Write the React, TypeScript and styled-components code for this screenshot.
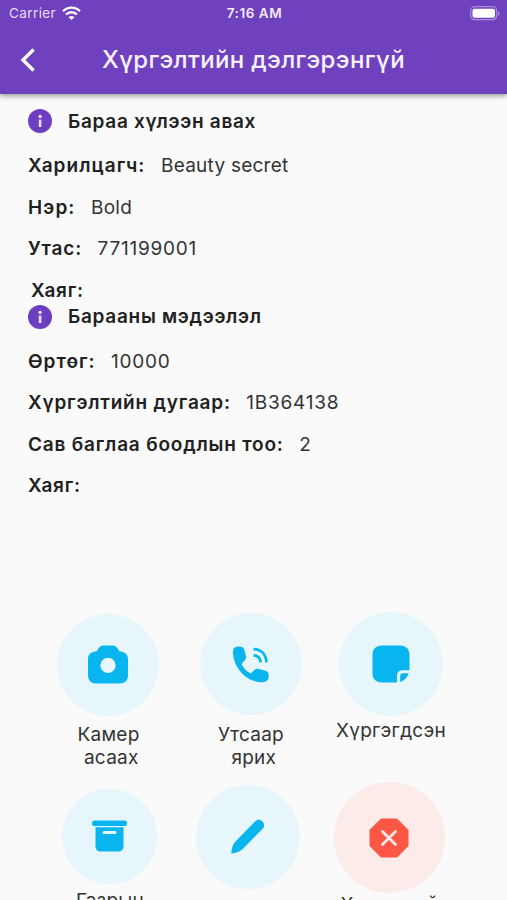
import React from "react";
import styled, { createGlobalStyle } from "styled-components";

const GlobalStyle = createGlobalStyle`
  *, *::before, *::after { box-sizing: border-box; }
  html, body { margin: 0; padding: 0; background: #fafafa; overflow: hidden; }
`;

const Screen = styled.div`
  width: 507px;
  height: 900px;
  overflow: hidden;
  display: flex;
  flex-direction: column;
  background: #fafafa;
  color: #212121;
  font-family: Inter, "Liberation Sans", sans-serif;
`;

const Header = styled.header`
  flex: none;
  height: 94px;
  background: #7041be;
  color: #fff;
  box-shadow: 0 2px 5px rgba(0, 0, 0, 0.38);
`;

const StatusBar = styled.div`
  height: 27px;
  display: grid;
  grid-template-columns: 1fr auto 1fr;
  align-items: center;
  padding: 0 7px 0 9px;
  font-size: 13px;
  line-height: 27px;
`;

const Carrier = styled.div`
  display: flex;
  align-items: center;
  gap: 6px;
  font-size: 13.5px;
  letter-spacing: 0.4px;
  color: #e6dcf5;
`;

const Clock = styled.div`
  font-size: 13.5px;
  font-weight: 600;
  letter-spacing: 0.55px;
  color: #f3ecfc;
`;

const Battery = styled.div`
  display: flex;
  justify-content: flex-end;
`;

const TitleBar = styled.div`
  height: 65px;
  display: flex;
  align-items: center;
  padding-left: 20px;
`;

const BackButton = styled.button`
  display: flex;
  width: 16px;
  padding: 0;
  border: 0;
  background: none;
  color: inherit;
`;

const Title = styled.h1`
  margin: 0 0 0 66px;
  font-size: 24px;
  line-height: 30px;
  font-weight: 500;
  letter-spacing: 0.36px;
  white-space: nowrap;
  color: #f8f2ff;
`;

const Details = styled.main`
  flex: none;
  height: 518px;
  padding: 14px 0 0 28px;
`;

const SectionTitle = styled.h2`
  display: flex;
  align-items: center;
  gap: 16px;
  height: 26px;
  margin: 0 0 11px;
  font-size: 19px;
  font-weight: 600;
  letter-spacing: 0.7px;
`;

const Field = styled.div<{ $last?: boolean }>`
  display: flex;
  align-items: center;
  gap: 15.5px;
  height: ${(p) => (p.$last ? 34 : 41.5)}px;
  padding: ${(p) => (p.$last ? "7px 0 0 3px" : "0")};
  font-size: 19px;
  white-space: nowrap;
`;

const FieldLabel = styled.span<{ $spacing?: number }>`
  font-weight: 600;
  letter-spacing: ${(p) => p.$spacing ?? 0.8}px;
`;

const FieldValue = styled.span<{ $numeric: boolean }>`
  font-weight: 400;
  letter-spacing: ${(p) => (p.$numeric ? 0.75 : 0.25)}px;
  color: #333;
`;

const ActionRow = styled.div<{ $columns: string; $height: number }>`
  flex: none;
  display: grid;
  grid-template-columns: ${(p) => p.$columns};
  height: ${(p) => p.$height}px;
  padding-left: 37px;
`;

const Action = styled.button<{ $top: number }>`
  display: flex;
  flex-direction: column;
  align-items: center;
  align-self: start;
  padding: 0;
  margin: ${(p) => p.$top}px 0 0;
  border: 0;
  background: none;
  color: #333;
  font: inherit;
`;

const Bubble = styled.span<{ $size: number; $danger?: boolean }>`
  display: flex;
  align-items: center;
  justify-content: center;
  width: ${(p) => p.$size}px;
  height: ${(p) => p.$size}px;
  border-radius: 50%;
  background: ${(p) => (p.$danger ? "#fbebe9" : "#e7f6fb")};
  color: ${(p) => (p.$danger ? "#ff5745" : "#08b5ef")};
`;

const ActionLabel = styled.span<{ $gap: number }>`
  margin-top: ${(p) => p.$gap}px;
  padding-left: 1px;
  font-size: 19px;
  line-height: 23.5px;
  letter-spacing: 0.25px;
  text-align: center;
  white-space: pre;
`;

const Wifi = () => (
  <svg width="19" height="15" viewBox="0 0 19 15" fill="none" stroke="#fff" strokeWidth="2.3">
    <path d="M1 5.2C5.8.4 13.2.4 18 5.2M4 8.5c3.1-3 7.9-3 11 0" />
    <path d="M6.5 11.2c1.6-1.5 4.4-1.5 6 0L9.5 14Z" fill="#fff" stroke="none" />
  </svg>
);

const BatteryIcon = () => (
  <svg width="30" height="15" viewBox="0 0 30 15">
    <rect x=".7" y=".7" width="26" height="13" rx="4" fill="none" stroke="#aa8cda" strokeWidth="1.2" />
    <rect x="2.5" y="2.8" width="22.5" height="9" rx="2" fill="#fff" />
    <path d="M28 5c2 1 2 4 0 5Z" fill="#aa8cda" />
  </svg>
);

const Info = () => (
  <svg width="24" height="24" viewBox="0 0 24 24">
    <circle cx="12" cy="12" r="12" fill="#6d3fc0" />
    <circle cx="12.1" cy="7.4" r="1.6" fill="#f4eafc" />
    <path d="M10.8 10.500h2.600V18h-2.600z" fill="#e9dcf8" />
  </svg>
);

const Camera = () => (
  <svg width="40" height="39" viewBox="0 0 40 39" fill="currentColor">
    <path fillRule="evenodd" d="M16 .5h8c3 0 4.400 1 5.600 3l1 1.700c.5.9 1 1.100 2 1.200C37 6.900 40 9.500 40 14v16c0 5.500-3 8.500-8.500 8.500h-23C3 38.500 0 35.500 0 30V14C0 9.500 3 6.900 7.400 6.400c1-.1 1.500-.3 2-1.200l1-1.700C11.600 1.500 13 .5 16 .5ZM20 12.700a7.700 7.700 0 1 0 0 15.400 7.700 7.700 0 0 0 0-15.400Z" />
  </svg>
);

const Phone = () => (
  <svg width="38" height="38" viewBox="0 0 38 38" fill="none">
    <path fill="currentColor" d="M1 7C1 3 3 1.500 7 1.500c3 0 4.500.8 5.300 3.300l1.500 5.400c.6 2.200.2 3.500-1.300 5.200l-3 3.600c2 4 5 7.300 9.200 9.500l3.400-3.300c1.400-1.400 2.800-1.700 4.700-1.300l6 1.500c2.800.7 4 2.300 4 5 0 4.500-2.600 6.800-7 6.800C14 37.200 1 22 1 7Z" />
    <path stroke="currentColor" strokeWidth="2.700" d="M21.500 4.200c8 .2 12.500 5.300 13 13.300M21.500 10.400c4.500.2 6.700 2.500 7.200 7" />
  </svg>
);

const Note = () => (
  <svg width="38" height="38" viewBox="0 0 38 38" fill="currentColor">
    <path d="M10 .5h18c6 0 9.500 3.500 9.500 9.500v15.200H31c-4 0-6 2-6 6v6.300H10C4 37.500.5 34 .5 28V10C.5 4 4 .5 10 .5Z" />
    <path d="M36.800 28.200H31c-2 0-2.800 1-2.800 3V37c4-1.500 7-4.500 8.600-8.800Z" />
  </svg>
);

const Archive = () => (
  <svg width="36" height="32" viewBox="0 0 36 32" fill="currentColor">
    <rect x="0" y=".5" width="35" height="5.500" rx="2.500" />
    <path fillRule="evenodd" d="M3.500 7.300h28V26c0 3.500-2 5.500-5.500 5.500H9C5.500 31.500 3.500 29.500 3.500 26ZM12 11a1.500 1.500 0 0 0 0 3h11a1.500 1.500 0 0 0 0-3Z" />
  </svg>
);

const Pencil = () => (
  <svg width="36" height="36" viewBox="0 0 36 36" fill="currentColor">
    <path d="M25 2.500c2.500-2.300 5.200-2.100 7.400 0 2.300 2.300 2.300 5-.1 7.500L13.500 29.200C10 32.800 6 34 1.300 34.600 1.700 29 2.600 25.500 6 22Z" />
  </svg>
);

const Stop = () => (
  <svg width="40" height="40" viewBox="0 0 40 40">
    <path d="M12 .5h16L39.500 12v16L28 39.500H12L.5 28V12Z" fill="currentColor" />
    <path d="m13.500 13.500 13 13m0-13-13 13" stroke="#fbebe9" strokeWidth="2.800" strokeLinecap="round" />
  </svg>
);

type Detail = { label: string; value: string; spacing?: number };

const recipient: Detail[] = [
  { label: "Харилцагч:", value: "Beauty secret", spacing: 1.05 },
  { label: "Нэр:", value: "Bold", spacing: 1.1 },
  { label: "Утас:", value: "771199001" },
];

const parcel: Detail[] = [
  { label: "Өртөг:", value: "10000", spacing: 1 },
  { label: "Хүргэлтийн дугаар:", value: "1B364138" },
  { label: "Сав баглаа боодлын тоо:", value: "2" },
  { label: "Хаяг:", value: "" },
];

const Fields = ({ rows }: { rows: Detail[] }) => (
  <>
    {rows.map(({ label, value, spacing }) => (
      <Field key={label}>
        <FieldLabel $spacing={spacing}>{label}</FieldLabel>
        <FieldValue $numeric={/\d/.test(value)}>{value}</FieldValue>
      </Field>
    ))}
  </>
);

export default function App() {
  return (
    <>
      <GlobalStyle />
      <Screen>
        <Header>
          <StatusBar>
            <Carrier>Carrier <Wifi /></Carrier>
            <Clock>7:16 AM</Clock>
            <Battery><BatteryIcon /></Battery>
          </StatusBar>
          <TitleBar>
            <BackButton aria-label="Буцах">
              <svg width="16" height="24" viewBox="0 0 16 24" fill="none" stroke="#fff" strokeWidth="3.400">
                <path d="M13.600 1.500 3 12l10.600 10.500" />
              </svg>
            </BackButton>
            <Title>Хүргэлтийн дэлгэрэнгүй</Title>
          </TitleBar>
        </Header>
        <Details>
          <SectionTitle><Info />Бараа хүлээн авах</SectionTitle>
          <Fields rows={recipient} />
          <Field $last><FieldLabel>Хаяг:</FieldLabel></Field>
          <SectionTitle><Info />Барааны мэдээлэл</SectionTitle>
          <Fields rows={parcel} />
        </Details>
        <ActionRow $columns="142px 143px 137px" $height={170}>
          <Action $top={1.5}>
            <Bubble $size={102}><Camera /></Bubble>
            <ActionLabel $gap={7}>{"Камер\n асаах"}</ActionLabel>
          </Action>
          <Action $top={1}>
            <Bubble $size={102}><Phone /></Bubble>
            <ActionLabel $gap={7.5}>{"Утсаар\n ярих"}</ActionLabel>
          </Action>
          <Action $top={0}>
            <Bubble $size={104}><Note /></Bubble>
            <ActionLabel $gap={3}>Хүргэгдсэн</ActionLabel>
          </Action>
        </ActionRow>
        <ActionRow $columns="145px 132px 150px" $height={118}>
          <Action $top={6.5}>
            <Bubble $size={95}><Archive /></Bubble>
            <ActionLabel $gap={5}>Газрын</ActionLabel>
          </Action>
          <Action $top={3}>
            <Bubble $size={104}><Pencil /></Bubble>
          </Action>
          <Action $top={0}>
            <Bubble $size={111} $danger><Stop /></Bubble>
            <ActionLabel $gap={0}>Хүргээгүй</ActionLabel>
          </Action>
        </ActionRow>
      </Screen>
    </>
  );
}
